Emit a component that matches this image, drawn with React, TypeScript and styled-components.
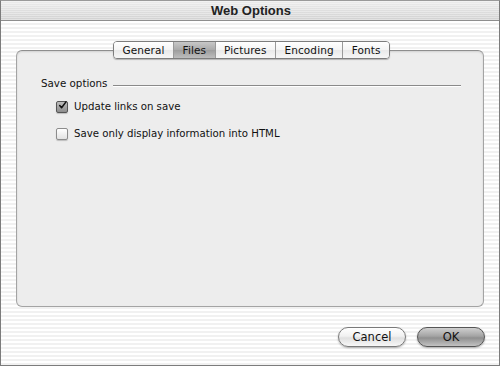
import React, { useState } from 'react';
import styled, { createGlobalStyle } from 'styled-components';

const GlobalStyle = createGlobalStyle`
  html, body {
    margin: 0;
    padding: 0;
    background: #ffffff;
  }
  body {
    font-family: "Lucida Grande", "DejaVu Sans", sans-serif;
  }
`;

const tabs = ['General', 'Files', 'Pictures', 'Encoding', 'Fonts'];

type CheckProps = {
  checked: boolean,
  label: string,
  onToggle: () => void,
}

const CheckRow = (props: CheckProps) => (
  <OptionRow onClick={props.onToggle}>
    <Box $checked={props.checked}>
      {props.checked && (
        <svg width="13" height="13" viewBox="0 0 13 13">
          <path d="M2.5 6.5 L5.2 9.8 L11.5 1.2" fill="none" stroke="#111" strokeWidth="2.2" strokeLinecap="round" strokeLinejoin="round" />
        </svg>
      )}
    </Box>
    <OptionLabel>{props.label}</OptionLabel>
  </OptionRow>
);

const App = () => {
  const [active, setActive] = useState('Files');
  const [updateLinks, setUpdateLinks] = useState(true);
  const [displayOnly, setDisplayOnly] = useState(false);

  return (
    <>
      <GlobalStyle />
      <Window>
        <TitleBar>Web Options</TitleBar>
        <Body>
          <TabStrip>
            {tabs.map(tab => (
              <Tab key={tab} $active={tab === active} onClick={() => setActive(tab)}>
                {tab}
              </Tab>
            ))}
          </TabStrip>
          <Panel>
            <GroupHeader>
              <GroupTitle>Save options</GroupTitle>
              <GroupRule />
            </GroupHeader>
            <Options>
              <CheckRow checked={updateLinks} label="Update links on save" onToggle={() => setUpdateLinks(v => !v)} />
              <CheckRow checked={displayOnly} label="Save only display information into HTML" onToggle={() => setDisplayOnly(v => !v)} />
            </Options>
          </Panel>
          <Footer>
            <PushButton>Cancel</PushButton>
            <PushButton $primary>OK</PushButton>
          </Footer>
        </Body>
      </Window>
    </>
  );
}

const Window = styled.div`
  width: 500px;
  height: 366px;
  box-sizing: border-box;
  border: 1px solid #7c7c7c;
  border-top-color: #9a9a9a;
  display: flex;
  flex-direction: column;
  background: repeating-linear-gradient(
    to bottom,
    #ffffff 0px,
    #ffffff 2px,
    #f1f1f1 2px,
    #f1f1f1 4px
  );
  overflow: hidden;
`;

const TitleBar = styled.div`
  height: 20px;
  box-sizing: border-box;
  border-bottom: 1px solid #8e8e8e;
  background:
    repeating-linear-gradient(to bottom, rgba(255,255,255,0.35) 0px, rgba(255,255,255,0.35) 1px, transparent 1px, transparent 2px),
    linear-gradient(to bottom, #ececec, #d2d2d2);
  display: flex;
  align-items: center;
  justify-content: center;
  padding-left: 2px;
  font-family: "Liberation Sans", Arial, sans-serif;
  font-size: 13px;
  font-weight: bold;
  color: #222;
`;

const Body = styled.div`
  flex: 1;
  display: flex;
  flex-direction: column;
  padding: 20px 14px 0 15px;
`;

const TabStrip = styled.div`
  align-self: center;
  display: flex;
  height: 18px;
  box-sizing: border-box;
  border: 1px solid #7d7d7d;
  border-radius: 4px;
  overflow: hidden;
  position: relative;
  z-index: 1;
  margin-left: 2px;
  box-shadow: 0 1px 1px rgba(0,0,0,0.25);
`;

const Tab = styled.div<{ $active?: boolean }>`
  display: flex;
  align-items: center;
  justify-content: center;
  padding: 0 8.5px;
  font-size: 10.5px;
  letter-spacing: 0.1px;
  color: #111;
  border-left: 1px solid #9a9a9a;
  cursor: default;
  background: ${p => p.$active
    ? 'linear-gradient(to bottom, #c8c8c8 0%, #a9a9a9 50%, #9c9c9c 51%, #bdbdbd 100%)'
    : 'linear-gradient(to bottom, #ffffff 0%, #f4f4f4 50%, #e9e9e9 51%, #f6f6f6 100%)'};
  &:first-child {
    border-left: none;
  }
`;

const Panel = styled.div`
  margin-top: -9px;
  height: 257px;
  margin-right: 1px;
  box-sizing: border-box;
  border: 1px solid #a4a4a4;
  border-top-color: #8e8e8e;
  border-radius: 6px;
  background: #ededed;
  box-shadow: inset 0 1px 2px rgba(0,0,0,0.12);
  padding: 26px 22px 0 24px;
  display: flex;
  flex-direction: column;
`;

const GroupHeader = styled.div`
  display: flex;
  align-items: center;
  gap: 6px;
`;

const GroupTitle = styled.span`
  font-size: 10.3px;
  color: #111;
`;

const GroupRule = styled.div`
  flex: 1;
  height: 0;
  border-top: 1px solid #8a8a8a;
  border-bottom: 1px solid #ffffff;
  margin-top: 5px;
`;

const Options = styled.div`
  display: flex;
  flex-direction: column;
  gap: 10px;
  padding: 9px 0 0 15px;
`;

const OptionRow = styled.label`
  display: flex;
  align-items: center;
  gap: 6px;
  height: 17px;
  cursor: default;
`;

const Box = styled.span<{ $checked?: boolean }>`
  width: 12px;
  height: 12px;
  box-sizing: border-box;
  border: 1px solid ${p => p.$checked ? '#555' : '#8c8c8c'};
  border-radius: 2px;
  background: ${p => p.$checked
    ? 'linear-gradient(to bottom, #bdbdbd, #8d8d8d)'
    : 'linear-gradient(to bottom, #ffffff, #e2e2e2)'};
  box-shadow: 0 1px 1px rgba(0,0,0,0.2);
  display: flex;
  align-items: center;
  justify-content: center;
  overflow: visible;
  svg {
    margin-top: -3px;
    margin-left: 1px;
  }
`;

const OptionLabel = styled.span`
  font-size: 10.2px;
  color: #111;
`;

const Footer = styled.div`
  display: flex;
  justify-content: flex-end;
  gap: 11px;
  padding: 20px 0 0 0;
`;

const PushButton = styled.button<{ $primary?: boolean }>`
  width: 68px;
  height: 20px;
  box-sizing: border-box;
  border-radius: 10px;
  border: 1px solid ${p => p.$primary ? '#555' : '#7a7a7a'};
  font-family: "Lucida Grande", "DejaVu Sans", sans-serif;
  font-size: 11.5px;
  color: #111;
  padding: 0;
  background: ${p => p.$primary
    ? 'linear-gradient(to bottom, #cfcfcf 0%, #a4a4a4 45%, #8f8f8f 55%, #c2c2c2 100%)'
    : 'linear-gradient(to bottom, #ffffff 0%, #f1f1f1 45%, #e0e0e0 55%, #f7f7f7 100%)'};
  box-shadow: 0 1px 2px rgba(0,0,0,0.3);
  cursor: default;
`;

export default App;
